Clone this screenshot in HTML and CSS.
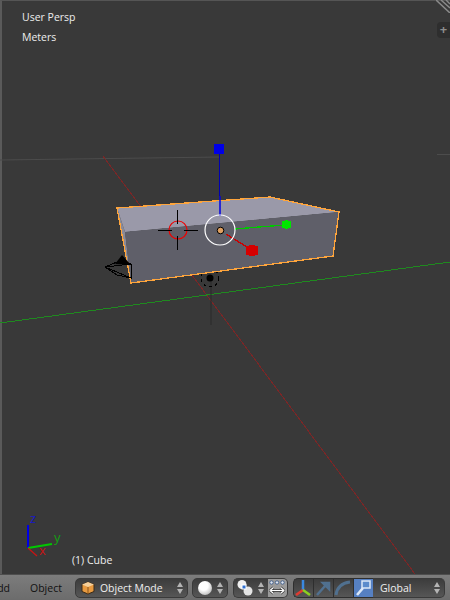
FILE: index.html
```html
<!DOCTYPE html>
<html lang="en">
<head>
  <meta charset="UTF-8">
  <title>Blender 3D View</title>
  <link rel="stylesheet" href="styles.css">
</head>
<body>
  <div class="view3d">
    <svg class="scene" width="450" height="574" viewBox="0 0 450 574">
      <!-- grid floor -->
      <line x1="0" y1="160" x2="220" y2="157" stroke="#4c4c4c"/>
      <line x1="437" y1="154.500" x2="450" y2="154.500" stroke="#4c4c4c"/>
      <line class="crisp" x1="103" y1="156" x2="415" y2="574" stroke="#7c2626"/>
      <line class="crisp" x1="0" y1="323" x2="450" y2="262" stroke="#1f8a1f"/>

      <!-- lamp -->
      <line x1="211" y1="278" x2="211" y2="325" stroke="#2a2a2a"/>
      <circle class="crisp" cx="210" cy="278" r="9" fill="none" stroke="#000" stroke-dasharray="3 3"/>
      <circle cx="210" cy="278" r="3.5" fill="#000"/>

      <!-- cube -->
      <polygon points="117,208 125,232 131,283" fill="#8a8a98"/>
      <polygon points="117,208 270,197 339,212 125,232" fill="#9a99a9"/>
      <polygon class="crisp" points="125,232 339,212 333,256 131,283" fill="#5f5f69"/>
      <polygon class="crisp" points="117,208 270,197 339,212 333,256 131,283" fill="none" stroke="#ffa53c" stroke-width="1.3"/>

      <!-- camera -->
      <g class="crisp" fill="none" stroke="#000">
        <polygon points="105,267 117,262 131,264 131,278 117,275"/>
        <line x1="105" y1="267" x2="131" y2="264"/>
        <line x1="105" y1="267" x2="131" y2="278"/>
      </g>
      <polygon points="122,255 131,265 115,264" fill="#000"/>

      <!-- 3d cursor -->
      <circle cx="178" cy="230" r="9" fill="none" stroke="#f00000" stroke-width="1.2"/>
      <g stroke="#000">
        <line x1="158" y1="230.500" x2="172" y2="230.500"/>
        <line x1="184" y1="230.500" x2="198" y2="230.500"/>
        <line x1="177.500" y1="210" x2="177.500" y2="224"/>
        <line x1="177.500" y1="236" x2="177.500" y2="250"/>
      </g>

      <!-- manipulator -->
      <line x1="219.500" y1="152" x2="219.500" y2="196" stroke="#0000b0"/>
      <line x1="220" y1="196" x2="220" y2="216" stroke="#0000e0" stroke-width="1.5"/>
      <rect x="214" y="144" width="10" height="10" fill="#0000e6"/>
      <line class="crisp" x1="235" y1="229" x2="284" y2="225" stroke="#00c800" stroke-width="1.3"/>
      <path d="M282 221h3v-1h3v1h3v7h-3v1h-3v-1h-3z" fill="#00e600"/>
      <line class="crisp" x1="226" y1="234" x2="247" y2="247" stroke="#c80000" stroke-width="1.3"/>
      <path d="M246 246h3v-1h6v1h3v9h-3v1h-6v-1h-3z" fill="#d60000"/>
      <circle cx="220" cy="230" r="15" fill="none" stroke="#fff" stroke-width="1.2"/>
      <circle cx="220.500" cy="230.500" r="3.300" fill="#e0a060" stroke="#000"/>

      <!-- orientation gizmo -->
      <line x1="28" y1="548" x2="28" y2="525" stroke="#0000e6" stroke-width="2"/>
      <line x1="28" y1="548" x2="52" y2="544" stroke="#00c800" stroke-width="2"/>
      <line x1="28" y1="548" x2="37" y2="556" stroke="#c81414" stroke-width="1.3"/>
      <text class="axis" x="30" y="523" fill="#1818c8">z</text>
      <text class="axis" x="54" y="542" fill="#14a014">y</text>
      <text class="axis" x="39" y="555" fill="#c81414">x</text>
    </svg>

    <div class="overlay-text">
      <div>User Persp</div>
      <div>Meters</div>
    </div>
    <div class="object-name">(1) Cube</div>

    <svg class="corner" width="14" height="13" viewBox="0 0 14 13">
      <g stroke="#8a8a8a" stroke-width="1.5">
        <line x1="0" y1="0" x2="14" y2="13"/>
        <line x1="5" y1="0" x2="14" y2="8"/>
        <line x1="10" y1="0" x2="14" y2="4"/>
      </g>
    </svg>
    <div class="props-tab">+</div>
  </div>

  <div class="header">
    <span class="menu menu-add">Add</span>
    <span class="menu">Object</span>

    <div class="select mode-select">
      <svg width="14" height="14" viewBox="0 0 14 14">
        <polygon points="7,1 13,3.500 13,10.500 7,13 1,10.500 1,3.500" fill="#e89a40" stroke="#3a2a18"/>
        <polygon points="7,1 13,3.500 7,6 1,3.500" fill="#f5cf9a"/>
        <line x1="7" y1="6" x2="7" y2="13" stroke="#8a5418"/>
      </svg>
      <span class="select-label">Object Mode</span>
      <span class="arrows"></span>
    </div>

    <div class="select shade-select">
      <span class="sphere"></span>
      <span class="arrows"></span>
    </div>

    <div class="group pivot-group">
      <div class="select pivot-select">
        <svg width="18" height="18" viewBox="0 0 18 18">
          <circle cx="6" cy="5.500" r="4.500" fill="#f0f0f0"/>
          <circle cx="12" cy="12" r="4.500" fill="#e4e4e4"/>
          <rect x="6" y="6" width="4" height="4" fill="#2f6fd0" stroke="#fff"/>
        </svg>
        <span class="arrows"></span>
      </div>
      <div class="layer-toggle">
        <svg width="18" height="18" viewBox="0 0 18 18">
          <g fill="#dfe6f0" stroke="#2f4f80" stroke-width="0.8">
            <circle cx="3.500" cy="3.500" r="1.700"/><circle cx="9" cy="3.500" r="1.700"/><circle cx="14.500" cy="3.500" r="1.700"/>
          </g>
          <path d="M2 11.500h14M2 11.500l3.500-3M2 11.500l3.500 3M16 11.500l-3.500-3M16 11.500l-3.500 3" fill="none" stroke="#333" stroke-width="2.600"/>
          <path d="M2 11.500h14M2 11.500l3.500-3M2 11.500l3.500 3M16 11.500l-3.500-3M16 11.500l-3.500 3" fill="none" stroke="#fff" stroke-width="1.200"/>
        </svg>
      </div>
    </div>

    <div class="group manip-group">
      <button class="icon-btn">
        <svg width="18" height="18" viewBox="0 0 18 18">
          <line x1="9" y1="11" x2="9" y2="1" stroke="#3a88e0" stroke-width="2.500"/>
          <line x1="9" y1="11" x2="2" y2="16" stroke="#e03a30" stroke-width="2.500"/>
          <line x1="9" y1="11" x2="16" y2="16" stroke="#8cd020" stroke-width="2.500"/>
        </svg>
      </button>
      <button class="icon-btn">
        <svg width="18" height="18" viewBox="0 0 18 18">
          <path d="M3 16L11 7M9 4h6v6z" fill="#50708f" stroke="#50708f" stroke-width="2.500"/>
        </svg>
      </button>
      <button class="icon-btn">
        <svg width="18" height="18" viewBox="0 0 18 18">
          <path d="M2 16C3 8 8 4 16 3" fill="none" stroke="#50708f" stroke-width="3"/>
        </svg>
      </button>
      <button class="icon-btn active">
        <svg width="18" height="18" viewBox="0 0 18 18">
          <path d="M3 16l6-7" fill="none" stroke="#dce8f8" stroke-width="2.600"/>
          <rect x="8" y="2" width="8" height="7" fill="#5c8ccc" stroke="#dce8f8" stroke-width="1.500"/>
        </svg>
      </button>
      <div class="select global-select">
        <span class="select-label">Global</span>
        <span class="arrows"></span>
      </div>
    </div>
  </div>
</body>
</html>
```

FILE: styles.css
```css
html, body {
  margin: 0;
  height: 100%;
}

body {
  width: 450px;
  height: 600px;
  overflow: hidden;
  display: flex;
  flex-direction: column;
  background: #727272;
  font-family: "Open Sans", "Noto Sans", sans-serif;
  font-size: 10.5px;
  color: #eee;
}

.view3d {
  position: relative;
  flex: 1;
  background: #393939;
  border-left: 2px solid #5a5a5a;
  border-top: 1px solid #555;
}

.scene {
  position: absolute;
  left: -2px;
  top: -1px;
}

.crisp {
  shape-rendering: crispEdges;
}

.axis {
  font-size: 13px;
}

.overlay-text {
  position: absolute;
  left: 20px;
  top: 9px;
  display: flex;
  flex-direction: column;
  gap: 5px;
  line-height: 15px;
}

.object-name {
  position: absolute;
  left: 70px;
  top: 552px;
  line-height: 15px;
}

.corner {
  position: absolute;
  right: 0;
  top: -1px;
}

.props-tab {
  position: absolute;
  right: 0;
  top: 21px;
  width: 13px;
  height: 16px;
  background: #2e2e2e;
  border-radius: 4px 0 0 4px;
  color: #8c8c8c;
  font-size: 13px;
  font-weight: bold;
  line-height: 15px;
  text-align: center;
}

.header {
  height: 26px;
  flex: none;
  box-sizing: border-box;
  padding-top: 3px;
  display: flex;
  align-items: flex-start;
  background: linear-gradient(#7c7c7c, #6c6c6c);
  border-top: 1px solid #4e4e4e;
  color: #111;
}

.menu {
  line-height: 20px;
}

.menu-add {
  width: 10px;
  direction: rtl;
  overflow: hidden;
  margin-right: 20px;
}

.select {
  height: 20px;
  box-sizing: border-box;
  display: flex;
  align-items: center;
  background: linear-gradient(#3c3c3c, #565656);
  border: 1px solid #3a3a3a;
  border-radius: 5px;
  color: #eee;
}

.select-label {
  flex: 1;
  line-height: 18px;
}

.arrows {
  position: relative;
  width: 7px;
  height: 14px;
  flex: none;
}

.arrows::before,
.arrows::after {
  content: "";
  position: absolute;
  left: 0;
  border-left: 3.5px solid transparent;
  border-right: 3.5px solid transparent;
}

.arrows::before {
  top: 1px;
  border-bottom: 5px solid #b4b4b4;
}

.arrows::after {
  bottom: 1px;
  border-top: 5px solid #b4b4b4;
}

.mode-select {
  width: 113px;
  margin-left: 13px;
  padding: 0 3px 0 5px;
  gap: 5px;
}

.shade-select {
  width: 36px;
  margin-left: 4px;
  padding: 0 3px 0 5px;
  justify-content: space-between;
}

.sphere {
  width: 14px;
  height: 14px;
  border-radius: 50%;
  background: radial-gradient(circle at 40% 35%, #fff 35%, #9a9a9a);
}

.group {
  display: flex;
  height: 20px;
}

.pivot-group {
  margin-left: 5px;
  width: 55px;
}

.pivot-select {
  width: 35px;
  padding: 0 3px 0 2px;
  justify-content: space-between;
  border-radius: 5px 0 0 5px;
  border-right: none;
}

.layer-toggle {
  width: 20px;
  height: 20px;
  box-sizing: border-box;
  display: flex;
  align-items: center;
  justify-content: center;
  background: #9a9a9a;
  border: 1px solid #3a3a3a;
  border-left: none;
  border-radius: 0 5px 5px 0;
}

.manip-group {
  margin-left: 5px;
}

.icon-btn {
  width: 20px;
  height: 20px;
  padding: 0;
  display: flex;
  align-items: center;
  justify-content: center;
  background: linear-gradient(#3c3c3c, #565656);
  border: 1px solid #2e2e2e;
  border-right: none;
}

.icon-btn:first-child {
  border-radius: 5px 0 0 5px;
}

.icon-btn.active {
  background: #5680c2;
}

.global-select {
  width: 72px;
  padding: 0 3px 0 7px;
  border-radius: 0 5px 5px 0;
  border-left: none;
}
```
